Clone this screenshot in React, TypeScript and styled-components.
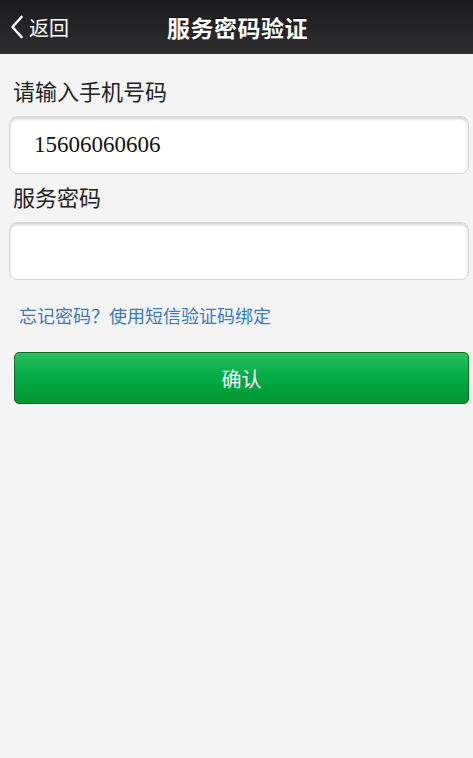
import React from "react";
import styled, { createGlobalStyle } from "styled-components";

const Global = createGlobalStyle`
  html, body {
    margin: 0;
    padding: 0;
    background: #f4f4f4;
    font-family: "Liberation Sans", "Noto Sans CJK SC", sans-serif;
  }
`;

const Page = styled.div`
  min-height: 758px;
  background: #f4f4f4;
`;

const Header = styled.header`
  height: 54px;
  display: flex;
  align-items: center;
  position: relative;
  background: linear-gradient(#1b1b1d, #2f2f31);
  color: #fff;
`;

const Back = styled.div`
  display: flex;
  align-items: center;
  gap: 5px;
  padding-left: 10px;
  font-size: 20px;
`;

const Title = styled.h1`
  position: absolute;
  left: 0;
  right: 0;
  margin: 0;
  padding-left: 2px;
  text-align: center;
  font-size: 23px;
  font-weight: bold;
  letter-spacing: 0.5px;
  pointer-events: none;
  text-shadow: 0 -1px 0 rgba(0, 0, 0, 0.6);
`;

const Form = styled.div`
  display: flex;
  flex-direction: column;
  padding: 25px 4px 0 9px;
`;

const Label = styled.div`
  font-size: 22px;
  color: #222;
  padding-left: 4px;
  line-height: 28px;
  margin-bottom: 9px;
`;

const Field = styled.div<{ $gap?: number }>`
  height: 56px;
  background: #fff;
  border: 1px solid #d9d6d6;
  border-radius: 8px;
  box-shadow: inset 0 2px 3px rgba(0, 0, 0, 0.18);
  display: flex;
  align-items: center;
  padding-left: 24px;
  font-family: "Liberation Serif", serif;
  font-size: 23px;
  color: #111;
  margin-bottom: ${(p) => p.$gap ?? 0}px;
`;

const Link = styled.a`
  font-size: 18px;
  line-height: 22px;
  color: #3b79c5;
  padding-left: 10px;
  margin: 26px 0 24px;
  text-decoration: none;
`;

const Confirm = styled.button`
  margin-left: 5px;
  height: 52px;
  border: 1px solid #0b6b2a;
  border-radius: 5px;
  background: linear-gradient(#2cc05c, #03ad4a 45%, #00952e);
  color: #fff;
  font-size: 20px;
  font-family: "Liberation Sans", "Noto Sans CJK SC", sans-serif;
`;

export default function App() {
  return (
    <Page>
      <Global />
      <Header>
        <Back>
          <svg width="14" height="24" viewBox="0 0 14 24">
            <path d="M11.5 2 L2.5 12 L11.5 22" fill="none" stroke="#fff" strokeWidth="2.6" strokeLinecap="round" strokeLinejoin="round" />
          </svg>
          返回
        </Back>
        <Title>服务密码验证</Title>
      </Header>
      <Form>
        <Label>请输入手机号码</Label>
        <Field $gap={11}>15606060606</Field>
        <Label>服务密码</Label>
        <Field />
        <Link>忘记密码？使用短信验证码绑定</Link>
        <Confirm>确认</Confirm>
      </Form>
    </Page>
  );
}
